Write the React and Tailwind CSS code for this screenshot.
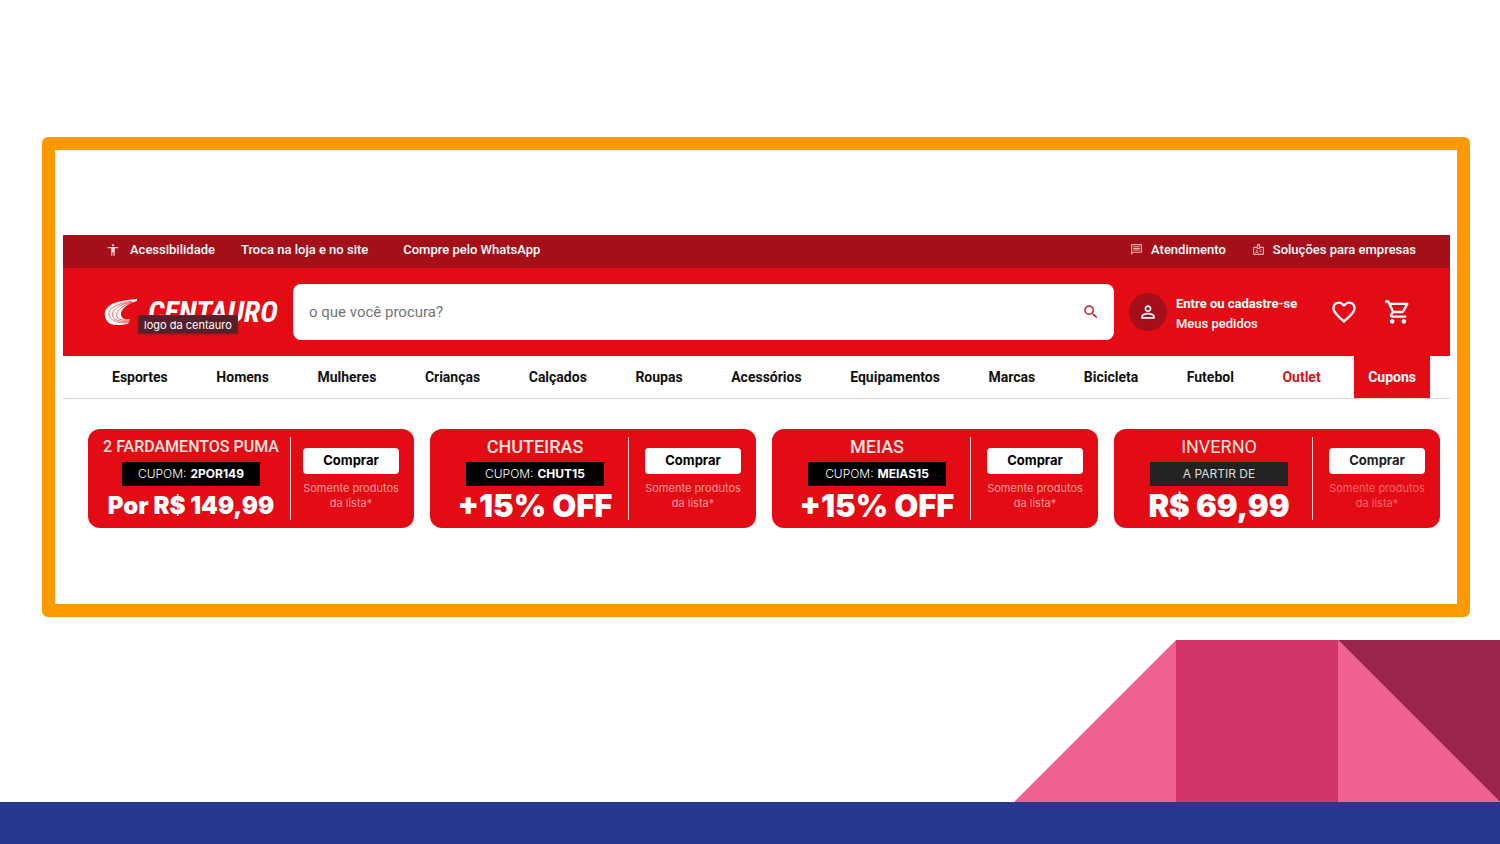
import React, { useState } from 'react';
import {
  MdAccessibility,
  MdFavoriteBorder,
  MdOutlineBadge,
  MdOutlineMessage,
  MdOutlineShoppingCart,
  MdPersonOutline,
  MdSearch,
} from 'react-icons/md';

const categories = [
  'Esportes',
  'Homens',
  'Mulheres',
  'Crianças',
  'Calçados',
  'Roupas',
  'Acessórios',
  'Equipamentos',
  'Marcas',
  'Bicicleta',
  'Futebol',
];

const coupons = [
  { title: '2 FARDAMENTOS PUMA', code: '2POR149', offer: 'Por R$ 149,99', small: true },
  { title: 'CHUTEIRAS', code: 'CHUT15', offer: '+15% OFF' },
  { title: 'MEIAS', code: 'MEIAS15', offer: '+15% OFF' },
  { title: 'INVERNO', offer: 'R$ 69,99', light: true },
];

const Logo = () => (
  <a href="#" className="relative flex items-center gap-[10px] w-[189px] shrink-0 text-white">
    <svg className="w-[34px] h-[27px] shrink-0" viewBox="0 0 34 27" fill="none">
      <path
        fill="currentColor"
        d="M33 0C20 1 9 3 4 8C-1 13 0 20 5 24C9 27 17 26 24 25L26 20C20 21 17 19 17 15C17 10 23 5 33 2Z"
      />
      <path stroke="#e30c15" strokeWidth="0.6" d="M27 2.500C16 4 8 7.500 5.500 12C3 18 9 25 24.500 23.600" />
      <path stroke="#e30c15" strokeWidth="0.6" d="M28 2.700C18 5 11 8.500 9 13C7 19 12 23.500 25 22.300" />
      <path stroke="#e30c15" strokeWidth="0.6" d="M29 2.900C20 6 14.500 9.500 13 14C11.500 19 15 22 25.500 21.100" />
    </svg>
    <span className="font-['Roboto_Condensed','Liberation_Sans_Narrow','Roboto',sans-serif] font-bold italic text-[30px] leading-8">
      CENTAURO
    </span>
    <span
      role="tooltip"
      className="absolute left-[34px] top-[19px] h-[19px] px-[5px] flex items-center whitespace-nowrap bg-[#56202a] border border-[#7c1c26] shadow font-['Inter',sans-serif] text-[11px] leading-4"
    >
      logo da centauro
    </span>
  </a>
);

const TopBar = () => (
  <div className="bg-[#a50f1a] h-[33px] pl-[43px] pr-[34px] pb-1 flex items-center justify-between text-white text-[13px] leading-4 font-medium">
    <div className="flex items-center">
      <a href="#" className="flex items-center gap-[10px]">
        <MdAccessibility className="w-[14px] h-[14px] text-[#ffd9d9]" />
        Acessibilidade
      </a>
      <a href="#" className="ml-[26px]">Troca na loja e no site</a>
      <a href="#" className="ml-[35px]">Compre pelo WhatsApp</a>
    </div>
    <div className="flex items-center gap-[26px]">
      <a href="#" className="flex items-center gap-2">
        <MdOutlineMessage className="w-[13px] h-[13px] text-[#f0b5b5]" />
        Atendimento
      </a>
      <a href="#" className="flex items-center gap-2">
        <MdOutlineBadge className="w-[13px] h-[13px] text-[#f0b5b5]" />
        Soluções para empresas
      </a>
    </div>
  </div>
);

const Header = () => {
  const [search, setSearch] = useState('');

  return (
    <div className="bg-[#e30c15] h-[88px] pl-[41px] pr-[38px] flex items-center">
      <Logo />
      <form
        onSubmit={(e) => e.preventDefault()}
        className="flex-1 h-14 bg-white rounded-lg flex items-center pl-4 pr-[14px]"
      >
        <input
          type="text"
          aria-label="Buscar produtos"
          value={search}
          onChange={(e) => setSearch(e.target.value)}
          placeholder="o que você procura?"
          className="flex-1 text-[15px] leading-6 text-gray-700 placeholder:text-[#757575] focus:outline-none"
        />
        <button type="submit" aria-label="Buscar" className="text-[#c4202b]">
          <MdSearch className="w-[18px] h-[18px]" />
        </button>
      </form>
      <div className="ml-[15px] w-[38px] h-[38px] rounded-full bg-[#a50f1a] text-white flex items-center justify-center">
        <MdPersonOutline className="w-5 h-5" />
      </div>
      <div className="ml-[9px] w-[125px] flex flex-col text-white text-[13px] leading-5 whitespace-nowrap pt-1">
        <a href="#" className="font-bold">Entre ou cadastre-se</a>
        <a href="#" className="font-medium">Meus pedidos</a>
      </div>
      <button type="button" aria-label="Favoritos" className="ml-[29px] text-white">
        <MdFavoriteBorder className="w-7 h-7" />
      </button>
      <button type="button" aria-label="Carrinho" className="ml-[26px] text-white">
        <MdOutlineShoppingCart className="w-7 h-7" />
      </button>
    </div>
  );
};

const Nav = () => (
  <nav className="h-[43px] pl-[49px] pr-5 border-b border-[#d8d8d8] flex items-center justify-between text-sm font-bold text-[#111]">
    {categories.map((category) => (
      <a key={category} href="#">{category}</a>
    ))}
    <a href="#" className="text-[#d3121d]">Outlet</a>
    <a href="#" className="-ml-[15px] self-stretch px-[14px] flex items-center bg-[#e30c15] text-white">
      Cupons
    </a>
  </nav>
);

const CouponCard = ({ coupon }) => (
  <div className="h-[99px] rounded-xl bg-[#e30c15] text-white flex items-center pr-[15px] font-['Inter',sans-serif]">
    <div className={`flex-1 h-[83px] flex flex-col items-center border-r border-[#ffd5d5] whitespace-nowrap ${coupon.small ? 'pl-1' : 'pl-3'}`}>
      <h3
        className={`shrink-0 font-['Roboto',sans-serif] leading-5 text-[#ffe3df] ${
          coupon.small ? 'text-base font-medium' : coupon.light ? 'text-lg' : 'text-lg font-medium'
        }`}
      >
        {coupon.title}
      </h3>
      <p
        className={`shrink-0 mt-[5px] w-[138px] h-6 flex items-center justify-center gap-1 text-xs ${
          coupon.light ? 'bg-[#222] text-[#ddd]' : 'bg-black'
        }`}
      >
        {coupon.code ? (
          <>
            <span className="font-light">CUPOM:</span>
            <strong className="font-bold">{coupon.code}</strong>
          </>
        ) : (
          'A PARTIR DE'
        )}
      </p>
      <p className={`mt-1 font-black ${coupon.small ? 'text-2xl leading-8' : 'text-[31px] leading-8'}`}>{coupon.offer}</p>
    </div>
    <div className={`w-24 pt-px flex flex-col items-center text-center ${coupon.small ? 'ml-3' : 'ml-4'}`}>
      <button
        type="button"
        className={`w-full h-[26px] rounded bg-white text-[13px] font-bold ${coupon.light ? 'text-[#222]' : 'text-black'}`}
      >
        Comprar
      </button>
      <p className={`mt-[7px] text-[11px] leading-[15px] whitespace-nowrap ${coupon.light ? 'text-[#f4676b]' : 'text-[#ff9b98]'}`}>
        Somente produtos
        <br />
        da lista*
      </p>
    </div>
  </div>
);

const App = () => {
  return (
    <div className="min-h-screen bg-white flex flex-col pt-[137px] font-['Roboto',sans-serif]">
      <main className="ml-[42px] mr-[30px] border-[13px] border-[#ff9900] rounded-md pt-[85px] pl-2 pr-[7px] pb-[76px]">
        <header>
          <TopBar />
          <Header />
          <Nav />
        </header>
        <section className="mt-[30px] ml-[25px] mr-[10px] grid grid-cols-4 gap-4">
          {coupons.map((coupon) => (
            <CouponCard key={coupon.title} coupon={coupon} />
          ))}
        </section>
      </main>

      <footer className="mt-auto flex flex-col">
        <svg className="self-end w-[486px] h-[162px]" viewBox="0 0 486 162">
          <path fill="#f06292" d="M0 162L162 0V162Z" />
          <path fill="#d23369" d="M162 0H324V162H162Z" />
          <path fill="#f06292" d="M324 0L486 162H324Z" />
          <path fill="#9a244b" d="M324 0H486V162Z" />
        </svg>
        <div className="h-[42px] bg-[#283890]"></div>
      </footer>
    </div>
  );
};

export default App;
